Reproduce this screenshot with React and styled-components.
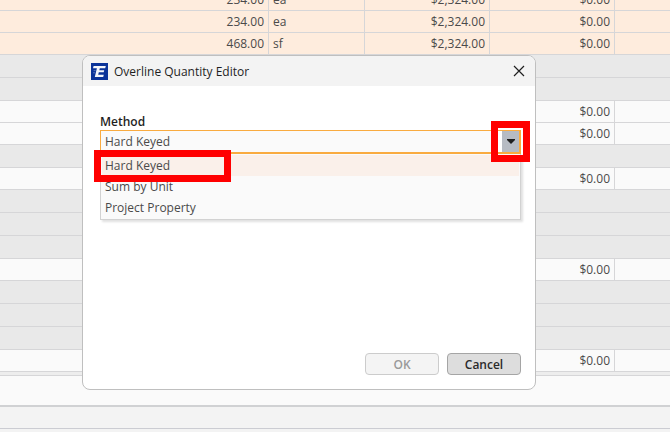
import React, { useState } from 'react';
import styled, { createGlobalStyle } from 'styled-components';

const GlobalStyle = createGlobalStyle`
    * {
        box-sizing: border-box;
    }

    body {
        margin: 0;
        font-family: "Open Sans", "Noto Sans", sans-serif;
        font-size: 12px;
        color: #4a4a4a;
        background: #f3f3f3;
    }

    button, select {
        font-family: inherit;
        font-size: inherit;
    }
`;

const Page = styled.div`
    position: relative;
    display: flex;
    flex-direction: column;
    height: 100vh;
    overflow: hidden;
`;

/* the grid is kept scrolled to its last row */
const GridArea = styled.div`
    flex: 1;
    min-height: 0;
    display: flex;
    flex-direction: column;
    justify-content: flex-end;
    overflow: hidden;
`;

const Grid = styled.table`
    width: 100%;
    table-layout: fixed;
    border-collapse: separate;
    border-spacing: 0;
`;

const colors = {
    item: '#feecdd',
    total: '#fafafa',
    group: '#e9e9e9',
};

const Row = styled.tr`
    height: ${props => props.$kind === 'group' ? 23 : 22}px;
    background: ${props => colors[props.$kind]};
`;

const Cell = styled.td`
    padding: 0 4px;
    line-height: 16px;
    text-align: ${props => props.$left ? 'left' : 'right'};
    border-bottom: 1px solid #d6d6d8;
    border-right: 1px solid #d6d6d8;

    &:last-child {
        border-right: 0;
    }
`;

const Splitter = styled.div`
    height: 4px;
    background: #ededed;
    border-bottom: 1px solid #d6d6d8;
`;

const Pane = styled.div`
    height: 31px;
    background: #fafafa;
    border-bottom: 2px solid #d0d1d3;
`;

const StatusBar = styled.div`
    height: 22px;
    background: #f3f3f3;
    border-bottom: 1px solid #cbccd2;
`;

const Footer = styled.div`
    height: 3px;
    background: #f3f3f3;
`;

const Dialog = styled.section`
    position: absolute;
    top: 55px;
    left: 82px;
    width: 454px;
    display: flex;
    flex-direction: column;
    background: #fff;
    border: 1px solid #bfbfbf;
    border-radius: 8px;
`;

const TitleBar = styled.header`
    display: flex;
    align-items: center;
    gap: 6px;
    height: 30px;
    padding: 0 8px;
    background: #f3f3f3;
    border-radius: 7px 7px 0 0;
    color: #1f1f1f;
`;

const Title = styled.h1`
    flex: 1;
    margin: 0;
    font-size: 12px;
    font-weight: 400;
`;

const CloseButton = styled.button`
    display: flex;
    padding: 2px;
    border: 0;
    background: none;
    color: #1f1f1f;
`;

const Body = styled.div`
    display: flex;
    flex-direction: column;
    min-height: 303px;
    padding: 28px 14px 14px 17px;
`;

const Label = styled.label`
    line-height: 16px;
    font-weight: 600;
    color: #1f1f1f;
`;

const Field = styled.div`
    position: relative;
`;

const ComboBox = styled.div`
    position: relative;
    z-index: 1;
    display: flex;
    height: 24px;
    border: 1px solid #f9ab40;
    border-bottom-width: 2px;
    background: #fafafa;
`;

const Select = styled.select`
    flex: 1;
    appearance: none;
    padding: 0 4px;
    border: 0;
    outline: 0;
    background: none;
    color: #4a4a4a;
`;

const ArrowButton = styled.button`
    display: flex;
    align-items: center;
    justify-content: center;
    width: 22px;
    padding: 0;
    border: 0;
    border-left: 4px solid #fff;
    border-right: 1px solid #f9ab40;
    background: #b6bbc3;
`;

const Menu = styled.ul`
    position: absolute;
    top: 24px;
    left: 0;
    right: 0;
    margin: 0;
    padding: 1px;
    list-style: none;
    background: #fafafa;
    border: 1px solid #d2d2d2;
    border-top: 0;
    box-shadow: 2px 2px 2px rgba(0, 0, 0, .12);
`;

const Option = styled.li`
    padding: 0 3px;
    line-height: 21px;
    background: ${props => props.$active ? '#faf0ea' : 'none'};
`;

const Actions = styled.footer`
    display: flex;
    justify-content: flex-end;
    gap: 8px;
    margin-top: auto;
`;

const Button = styled.button`
    width: 74px;
    height: 22px;
    padding: 0;
    font-weight: 600;
    color: #2a2a2a;
    background: #dddddd;
    border: 1px solid #a5a5a5;
    border-radius: 4px;

    &:disabled {
        color: #9a9a9a;
        background: #f4f4f4;
        border-color: #cccccc;
    }
`;

const Marker = styled.div`
    position: absolute;
    z-index: 2;
    border: 7px solid #ff0000;
    pointer-events: none;
`;

const OptionMarker = styled(Marker)`
    top: 20px;
    left: -6px;
    width: 137px;
    height: 32px;
`;

const ArrowMarker = styled(Marker)`
    top: -9px;
    right: -9px;
    width: 39px;
    height: 41px;
`;

const rows = [
    { kind: 'item', qty: '234.00', unit: 'ea', cost: '$2,324.00', total: '$0.00' },
    { kind: 'item', qty: '234.00', unit: 'ea', cost: '$2,324.00', total: '$0.00' },
    { kind: 'item', qty: '468.00', unit: 'sf', cost: '$2,324.00', total: '$0.00' },
    { kind: 'group' },
    { kind: 'group' },
    { kind: 'total', total: '$0.00' },
    { kind: 'total', total: '$0.00' },
    { kind: 'group' },
    { kind: 'total', total: '$0.00' },
    { kind: 'group' },
    { kind: 'group' },
    { kind: 'group' },
    { kind: 'total', total: '$0.00' },
    { kind: 'group' },
    { kind: 'group' },
    { kind: 'group' },
    { kind: 'total', total: '$0.00' },
];

const methods = ['Hard Keyed', 'Sum by Unit', 'Project Property'];

const Logo = () => (
    <svg width="17" height="17" viewBox="0 0 17 17" aria-hidden="true">
        <rect width="17" height="17" fill="#0b3399" />
        <path d="M2.6 3H14.8L14.2 5.2H8.8L8.3 7.3H13.2L12.7 9.3H7.8L7.2 11.8H12.8L12.2 14H3.8L5.9 5.2H2z" fill="#f4f6fb" />
        <path d="M2.6 7.6H4.6M2 9.8H4" stroke="#5674bd" strokeWidth="1" />
    </svg>
);

const CloseIcon = () => (
    <svg width="12" height="12" viewBox="0 0 12 12" aria-hidden="true">
        <path d="M1 1l10 10M11 1L1 11" stroke="currentColor" strokeWidth="1.2" fill="none" />
    </svg>
);

const ArrowIcon = () => (
    <svg width="8" height="6" viewBox="0 0 8 6" aria-hidden="true">
        <path d="M0 0h8v1L4 5 0 1z" fill="#1f1f1f" />
    </svg>
);

const EstimateGrid = () => (
    <Grid>
        <colgroup>
            <col width="269" />
            <col width="96" />
            <col width="125" />
            <col width="125" />
            <col />
        </colgroup>
        <tbody>
            {rows.map((row, i) => (
                <Row key={i} $kind={row.kind}>
                    {row.kind === 'group' ? <Cell colSpan={5} /> : (
                        <>
                            <Cell>{row.qty}</Cell>
                            <Cell $left>{row.unit}</Cell>
                            <Cell>{row.cost}</Cell>
                            <Cell>{row.total}</Cell>
                            <Cell />
                        </>
                    )}
                </Row>
            ))}
        </tbody>
    </Grid>
);

const QuantityEditor = () => {
    const [method, setMethod] = useState(methods[0]);

    return (
        <Dialog role="dialog" aria-labelledby="editor-title">
            <TitleBar>
                <Logo />
                <Title id="editor-title">Overline Quantity Editor</Title>
                <CloseButton aria-label="Close"><CloseIcon /></CloseButton>
            </TitleBar>
            <Body>
                <Label htmlFor="method">Method</Label>
                <Field>
                    <ComboBox>
                        <Select id="method" value={method} onChange={e => setMethod(e.target.value)}>
                            {methods.map(name => <option key={name}>{name}</option>)}
                        </Select>
                        <ArrowButton aria-label="Show methods"><ArrowIcon /></ArrowButton>
                    </ComboBox>
                    <Menu role="listbox" aria-label="Method">
                        {methods.map(name => (
                            <Option
                                key={name}
                                role="option"
                                aria-selected={name === method}
                                $active={name === method}
                                onClick={() => setMethod(name)}
                            >
                                {name}
                            </Option>
                        ))}
                    </Menu>
                    <OptionMarker />
                    <ArrowMarker />
                </Field>
                <Actions>
                    <Button disabled>OK</Button>
                    <Button>Cancel</Button>
                </Actions>
            </Body>
        </Dialog>
    );
};

export default function App() {
    return (
        <Page>
            <GlobalStyle />
            <GridArea>
                <EstimateGrid />
            </GridArea>
            <Splitter />
            <Pane />
            <StatusBar />
            <Footer />
            <QuantityEditor />
        </Page>
    );
}
